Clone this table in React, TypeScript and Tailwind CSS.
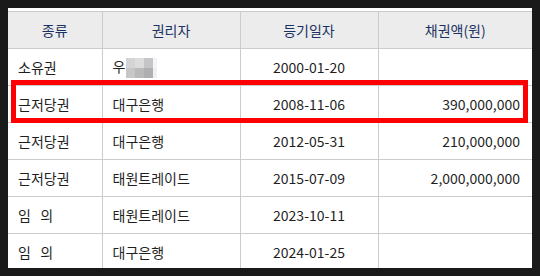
import React from 'react';

interface Row {
  kind: string;
  holder: string;
  date: string;
  amount: string;
  masked?: boolean;
}

const rows: Row[] = [
  { kind: '소유권', holder: '우', date: '2000-01-20', amount: '', masked: true },
  { kind: '근저당권', holder: '대구은행', date: '2008-11-06', amount: '390,000,000' },
  { kind: '근저당권', holder: '대구은행', date: '2012-05-31', amount: '210,000,000' },
  { kind: '근저당권', holder: '태원트레이드', date: '2015-07-09', amount: '2,000,000,000' },
  { kind: '임   의', holder: '태원트레이드', date: '2023-10-11', amount: '' },
  { kind: '임   의', holder: '대구은행', date: '2024-01-25', amount: '' },
];

const Mosaic: React.FC = () => (
  <span className="ml-[1px] inline-grid grid-cols-[9px_9px_9px_4px] grid-rows-[10px_10px] align-middle">
    <span className="bg-[#d4d4d6]" />
    <span className="bg-[#dcdcdd]" />
    <span className="bg-[#c5c5c7]" />
    <span className="bg-[#f4f4f6]" />
    <span className="bg-[#c7c7c8]" />
    <span className="bg-[#b9b9ba]" />
    <span className="bg-[#afafb1]" />
    <span className="bg-[#f0f0f2]" />
  </span>
);

const App: React.FC = () => {
  return (
    <div className="w-[540px] h-[276px] bg-[#1a1a1a] p-2 font-['Noto_Sans_CJK_KR','Noto_Sans',sans-serif]">
      <div className="relative h-[260px] w-[524px] overflow-hidden bg-white pt-[3px]">
        <table className="w-full table-fixed border-collapse text-[14px] text-[#1f1f1f]">
          <colgroup>
            <col className="w-[94px]" />
            <col className="w-[138px]" />
            <col className="w-[138px]" />
            <col className="w-[154px]" />
          </colgroup>
          <thead>
            <tr className="h-[37px] bg-[#ececec] text-[#1a3263]">
              <th className="border-t border-b border-r border-[#cccccc] font-normal">종류</th>
              <th className="border-t border-b border-r border-[#cccccc] font-normal">권리자</th>
              <th className="border-t border-b border-r border-[#cccccc] font-normal">등기일자</th>
              <th className="border-t border-b border-[#cccccc] font-normal">채권액(원)</th>
            </tr>
          </thead>
          <tbody>
            {rows.map((r, i) => (
              <tr key={i} className="h-[37px]">
                <td className="border-b border-r border-[#cccccc] pl-[10px] whitespace-pre">{r.kind}</td>
                <td className="border-b border-r border-[#cccccc] pl-[10px]">
                  {r.holder}
                  {r.masked && <Mosaic />}
                </td>
                <td className="border-b border-r border-[#cccccc] text-center">{r.date}</td>
                <td className="border-b border-[#cccccc] pr-[12px] text-right">{r.amount}</td>
              </tr>
            ))}
          </tbody>
        </table>
        {/* highlight box over the second row */}
        <div className="absolute left-[3px] top-[72px] h-[43px] w-[517px] border-[5px] border-[#ff0000]" />
      </div>
    </div>
  );
};

export default App;
